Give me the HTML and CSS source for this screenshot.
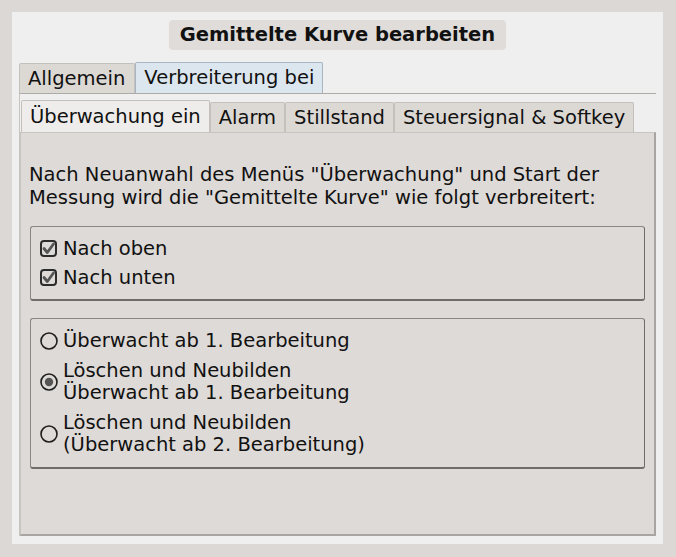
FILE: index.html
```html
<!DOCTYPE html>
<html lang="de">
<head>
<meta charset="utf-8">
<title>Gemittelte Kurve bearbeiten</title>
<link rel="stylesheet" href="styles.css">
</head>
<body>
<div class="panel">
  <div class="title-row"><div class="title">Gemittelte Kurve bearbeiten</div></div>
  <div class="outer">
    <div class="tabbar outer-tabs">
      <div class="tab">Allgemein</div>
      <div class="tab selected-blue">Verbreiterung bei</div>
    </div>
    <div class="outer-pane">
      <div class="tabbar inner-tabs">
        <div class="tab selected">Überwachung ein</div>
        <div class="tab">Alarm</div>
        <div class="tab">Stillstand</div>
        <div class="tab">Steuersignal &amp; Softkey</div>
      </div>
      <div class="inner-pane">
        <p class="intro">Nach Neuanwahl des Menüs "Überwachung" und Start der Messung wird die "Gemittelte Kurve" wie folgt verbreitert:</p>
        <div class="group checks">
          <div class="row">
            <span class="ind"><svg width="17" height="17" viewBox="0 0 17 17"><rect x="1" y="1" width="15" height="15" rx="3" fill="#dedad7" stroke="#2b2b2b" stroke-width="2"/><path d="M4 8.5 L7.3 12.5 L13.5 4" fill="none" stroke="#555" stroke-width="2.8" stroke-linecap="round" stroke-linejoin="round"/></svg></span>
            <span>Nach oben</span>
          </div>
          <div class="row">
            <span class="ind"><svg width="17" height="17" viewBox="0 0 17 17"><rect x="1" y="1" width="15" height="15" rx="3" fill="#dedad7" stroke="#2b2b2b" stroke-width="2"/><path d="M4 8.5 L7.3 12.5 L13.5 4" fill="none" stroke="#555" stroke-width="2.8" stroke-linecap="round" stroke-linejoin="round"/></svg></span>
            <span>Nach unten</span>
          </div>
        </div>
        <div class="group radios">
          <div class="row">
            <span class="ind"><svg width="18" height="18" viewBox="0 0 18 18"><circle cx="9" cy="9" r="8" fill="#dedad7" stroke="#1e1e1e" stroke-width="1.6"/></svg></span>
            <span>Überwacht ab 1. Bearbeitung</span>
          </div>
          <div class="row">
            <span class="ind"><svg width="18" height="18" viewBox="0 0 18 18"><circle cx="9" cy="9" r="8" fill="#dedad7" stroke="#1e1e1e" stroke-width="1.6"/><circle cx="9" cy="9" r="4.2" fill="#555"/></svg></span>
            <span>Löschen und Neubilden<br>Überwacht ab 1. Bearbeitung</span>
          </div>
          <div class="row">
            <span class="ind"><svg width="18" height="18" viewBox="0 0 18 18"><circle cx="9" cy="9" r="8" fill="#dedad7" stroke="#1e1e1e" stroke-width="1.6"/></svg></span>
            <span>Löschen und Neubilden<br>(Überwacht ab 2. Bearbeitung)</span>
          </div>
        </div>
      </div>
    </div>
  </div>
</div>
</body>
</html>
```
FILE: styles.css
```css
html, body {
  margin: 0;
  padding: 0;
  background: #dcd8d5;
  font-family: "DejaVu Sans", "Noto Sans", sans-serif;
  font-size: 19.5px;
  color: #111;
}
.panel {
  margin: 12px;
  width: 651px;
  height: 532px;
  box-sizing: border-box;
  background: #efefef;
  padding: 8px 7px 8px 7px;
  display: flex;
  flex-direction: column;
}
.title-row {
  display: flex;
  justify-content: center;
}
.title {
  background: #dfdcd9;
  border-radius: 4px;
  height: 30px;
  line-height: 30px;
  padding: 0 11px;
  font-weight: bold;
}
.outer {
  margin-top: 12px;
  flex: 1;
  display: flex;
  flex-direction: column;
}
.tabbar {
  display: flex;
  align-items: flex-end;
}
.tab {
  box-sizing: border-box;
  padding: 0 8px;
  background: #dcd8d4;
  border: 1px solid #c4c0bc;
  border-bottom: none;
  border-radius: 2px 2px 0 0;
  white-space: nowrap;
}
.outer-tabs .tab {
  height: 30px;
  line-height: 30px;
}
.outer-tabs .tab:first-child {
  padding-right: 9px;
}
.outer-tabs .tab.selected-blue {
  height: 31px;
  background: #dce6ee;
  border-color: #a9b6c1;
}
.outer-pane {
  flex: 1;
  border-top: 1px solid #aeaaa6;
  border-left: 1px solid #c8c4c0;
  padding: 6px 0 0 1px;
  display: flex;
  flex-direction: column;
}
.inner-tabs .tab {
  height: 30px;
  line-height: 30px;
}
.inner-tabs .tab.selected {
  height: 32px;
  line-height: 32px;
  background: #efedeb;
}
.inner-pane {
  flex: 1;
  background: #dedad7;
  border: 1px solid #c8c4c0;
  border-right: 2px solid #a9a5a1;
  border-bottom: 2px solid #a9a5a1;
  margin-left: -1px;
  padding: 30px 9px 0 8px;
}
.intro {
  margin: 0;
  line-height: 23px;
}
.group {
  margin: 17px 0 0 1px;
  width: 615px;
  box-sizing: border-box;
  border: 1px solid #8a8683;
  border-right-color: #6f6c69;
  border-bottom: 2px solid #6f6c69;
  border-radius: 3px;
  padding-left: 9px;
}
.checks {
  padding-top: 7px;
  padding-bottom: 7px;
}
.checks .row {
  height: 29px;
}
.radios {
  padding-top: 11px;
  padding-bottom: 11px;
  display: flex;
  flex-direction: column;
  gap: 8px;
}
.row {
  display: flex;
  align-items: center;
  line-height: 22px;
}
.checks .ind {
  width: 17px;
  height: 17px;
  margin-right: 6px;
}
.radios .ind {
  width: 18px;
  height: 18px;
  margin-right: 5px;
}
.ind svg {
  display: block;
}
```
